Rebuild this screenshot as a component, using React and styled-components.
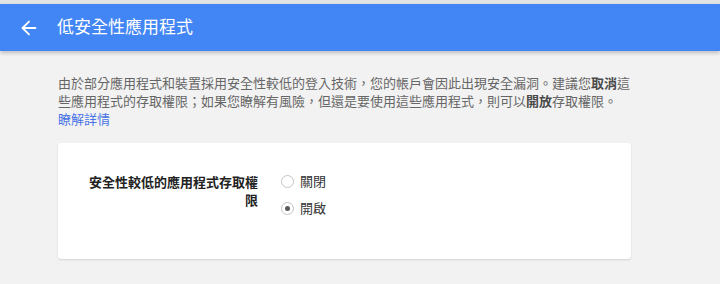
import React from 'react'
import styled, { createGlobalStyle } from 'styled-components'
import { ArrowLeft } from 'lucide-react'

const GlobalStyle = createGlobalStyle`
  html, body {
    margin: 0;
    padding: 0;
    background: #f2f2f2;
    font-family: "Liberation Sans", "Noto Sans CJK TC", sans-serif;
  }
`

const Page = styled.div`
  min-height: 284px;
  border-top: 4px solid #e3e3e3;
  background: #f2f2f2;
`

const Header = styled.header`
  height: 47px;
  background: #4285f4;
  display: flex;
  align-items: center;
  box-shadow: 0 2px 4px rgba(0, 0, 0, 0.22);
`

const BackButton = styled.div`
  width: 22px;
  height: 22px;
  margin-left: 18px;
  margin-right: 17px;
  display: flex;
  color: #ffffff;
`

const Title = styled.h1`
  margin: 0;
  font-size: 17px;
  font-weight: 400;
  color: #ffffff;
  line-height: 24px;
`

const Content = styled.main`
  width: 573px;
  margin-left: 58px;
  padding-top: 24px;
`

const Intro = styled.p`
  margin: 0;
  font-size: 13px;
  line-height: 18px;
  color: #666666;
`

const Strong = styled.b`
  font-weight: 700;
  color: #4a4a4a;
`

const MoreLink = styled.a`
  color: #4773e6;
  text-decoration: none;
`

const Card = styled.section`
  margin-top: 14px;
  height: 116px;
  box-sizing: border-box;
  background: #ffffff;
  border-radius: 3px;
  box-shadow: 0 1px 2px rgba(0, 0, 0, 0.13);
  padding: 31px 0 0 30px;
  display: flex;
  align-items: flex-start;
  gap: 23px;
`

const SettingLabel = styled.div`
  width: 170px;
  text-align: right;
  font-size: 13px;
  line-height: 18px;
  font-weight: 700;
  color: #222222;
`

const Options = styled.div`
  display: flex;
  flex-direction: column;
  gap: 8px;
  margin-top: -2px;
`

const Option = styled.label`
  display: flex;
  align-items: center;
  gap: 6px;
  font-size: 13px;
  line-height: 19px;
  color: #333333;
`

const RadioMark = styled.span`
  width: 11px;
  height: 11px;
  border-radius: 50%;
  border: 1px solid #c4c4c4;
  background: #ffffff;
  display: flex;
  align-items: center;
  justify-content: center;
  &::after {
    content: '';
    width: 5px;
    height: 5px;
    border-radius: 50%;
    background: ${props => (props.checked ? '#5a5a5a' : 'transparent')};
  }
`

const options = [
  { id: 'off', text: '關閉', checked: false },
  { id: 'on', text: '開啟', checked: true },
]

export default function App() {
  return (
    <Page>
      <GlobalStyle />
      <Header>
        <BackButton>
          <ArrowLeft size={22} strokeWidth={2} />
        </BackButton>
        <Title>低安全性應用程式</Title>
      </Header>
      <Content>
        <Intro>
          由於部分應用程式和裝置採用安全性較低的登入技術，您的帳戶會因此出現安全漏洞。建議您<Strong>取消</Strong>這些應用程式的存取權限；如果您瞭解有風險，但還是要使用這些應用程式，則可以<Strong>開放</Strong>存取權限。
          <br />
          <MoreLink href="#">瞭解詳情</MoreLink>
        </Intro>
        <Card>
          <SettingLabel>安全性較低的應用程式存取權限</SettingLabel>
          <Options>
            {options.map(o => (
              <Option key={o.id}>
                <RadioMark checked={o.checked} />
                {o.text}
              </Option>
            ))}
          </Options>
        </Card>
      </Content>
    </Page>
  )
}
